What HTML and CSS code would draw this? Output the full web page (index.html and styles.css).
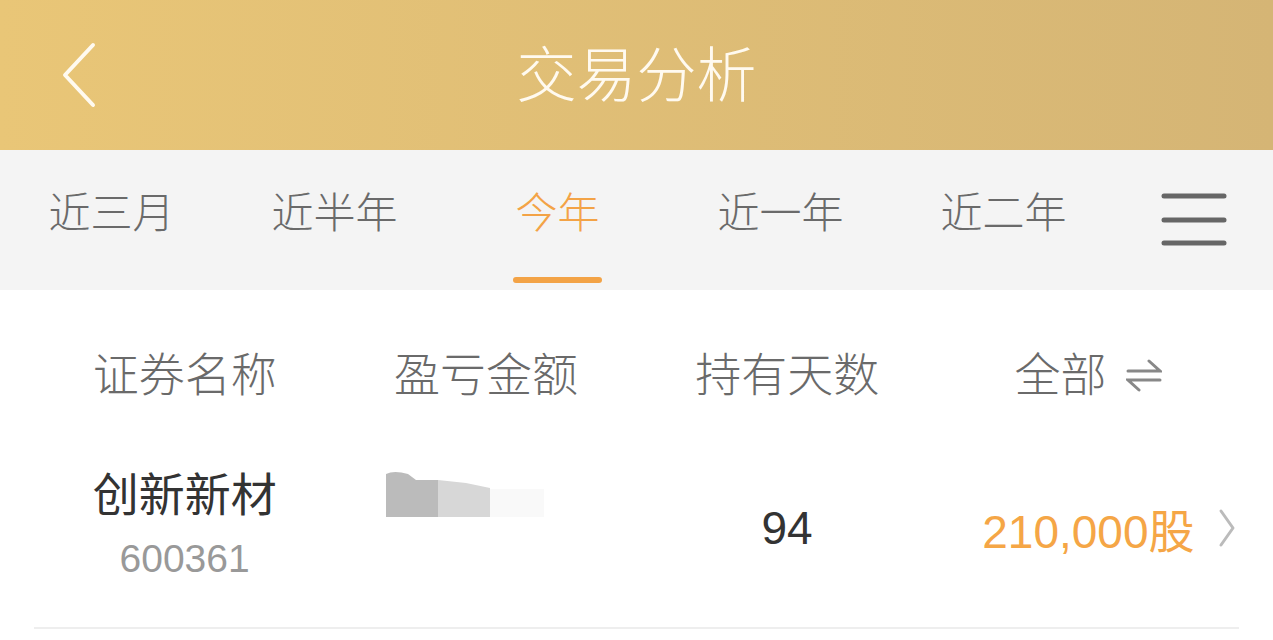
FILE: index.html
```html
<!DOCTYPE html>
<html lang="zh-CN">
<head>
    <meta charset="UTF-8">
    <meta name="viewport" content="width=device-width, initial-scale=1.0">
    <title>交易分析</title>
    <link rel="stylesheet" href="styles.css">
</head>
<body>
    <div class="header">
        <div class="back">
            <svg width="36" height="66" viewBox="0 0 36 66">
                <polyline points="31,3 3,33 31,63" fill="none" stroke="#fffaf0" stroke-width="4" stroke-linecap="round" stroke-linejoin="round"/>
            </svg>
        </div>
        <div class="title">交易分析</div>
        <div></div>
    </div>

    <div class="tabs">
        <div class="tab"><span>近三月</span></div>
        <div class="tab"><span>近半年</span></div>
        <div class="tab active"><span>今年</span><i class="bar"></i></div>
        <div class="tab"><span>近一年</span></div>
        <div class="tab"><span>近二年</span></div>
        <div class="menu">
            <svg width="66" height="54" viewBox="0 0 66 54">
                <g stroke="#666" stroke-width="5" stroke-linecap="round">
                    <line x1="3" y1="3" x2="63" y2="3"/>
                    <line x1="3" y1="27" x2="63" y2="27"/>
                    <line x1="3" y1="50" x2="63" y2="50"/>
                </g>
            </svg>
        </div>
    </div>

    <div class="list">
        <div class="list-head">
            <div class="cell">证券名称</div>
            <div class="cell">盈亏金额</div>
            <div class="cell">持有天数</div>
            <div class="cell">全部
                <svg class="swap" width="36" height="33" viewBox="0 0 36 33">
                    <g fill="none" stroke="#888" stroke-width="3" stroke-linecap="round">
                        <polyline points="23,2 34,12 2,12"/>
                        <polyline points="34,21 2,21 13,31"/>
                    </g>
                </svg>
            </div>
        </div>

        <div class="row">
            <div class="cell stock">
                <div class="name">创新新材</div>
                <div class="code">600361</div>
            </div>
            <div class="cell profit">
                <svg width="160" height="46" viewBox="0 0 160 46">
                    <path d="M0 3 Q8 -1 22 3 L30 9 L52 9 L52 46 L0 46 Z" fill="#bbbbbb"/>
                    <path d="M52 9 L80 12 L104 17 L104 46 L52 46 Z" fill="#d7d7d7"/>
                    <rect x="104" y="18" width="54" height="28" fill="#f9f9f9"/>
                </svg>
            </div>
            <div class="cell num">94</div>
            <div class="cell amount">
                <span class="shares">210,000股</span>
                <svg class="more" width="18" height="40" viewBox="0 0 18 40">
                    <polyline points="3,3 15,20 3,37" fill="none" stroke="#bbb" stroke-width="3" stroke-linecap="round" stroke-linejoin="round"/>
                </svg>
            </div>
        </div>
    </div>
</body>
</html>
```

FILE: styles.css
```css
body {
    margin: 0;
    font-family: "Liberation Sans", "Noto Sans CJK SC", sans-serif;
    font-weight: 300;
    background: #fff;
}

/* top bar */
.header {
    height: 150px;
    display: grid;
    grid-template-columns: 1fr auto 1fr;
    align-items: center;
    background: linear-gradient(to right, #e9c677, #d5b575);
}

.back {
    padding-left: 62px;
    display: flex;
    align-items: center;
}

.title {
    color: #fffaf0;
    font-size: 60px;
    line-height: 60px;
    margin-top: 4px;
}

/* period tabs */
.tabs {
    display: flex;
    height: 140px;
    background: #f4f4f4;
}

.tab {
    width: 223px;
    display: flex;
    flex-direction: column;
    align-items: center;
    padding-top: 43px;
    box-sizing: border-box;
    font-size: 42px;
    line-height: 42px;
    color: #6a6a6a;
}

.tab.active {
    color: #f3a346;
}

.tab .bar {
    width: 89px;
    height: 6px;
    margin-top: 42px;
    border-radius: 3px;
    background: #f3a346;
}

.menu {
    flex: 1;
    display: flex;
    align-items: center;
    justify-content: center;
}

/* list */
.list {
    padding: 0 34px;
}

.list-head, .row {
    display: grid;
    grid-template-columns: repeat(4, 1fr);
}

.list-head {
    height: 170px;
    align-items: center;
    font-size: 46px;
    line-height: 46px;
    color: #6a6a6a;
}

.cell {
    display: flex;
    justify-content: center;
    align-items: center;
}

.swap {
    margin-left: 20px;
}

.row {
    padding: 4px 0 35px;
    align-items: center;
    border-bottom: 2px solid #eeeeee;
}

.stock {
    flex-direction: column;
}

.name {
    font-size: 46px;
    line-height: 62px;
    font-weight: 400;
    color: #333;
}

.code {
    font-size: 39px;
    line-height: 66px;
    font-weight: 400;
    color: #999;
}

.profit {
    align-self: start;
    justify-content: flex-start;
    padding-left: 51px;
    margin-top: 7px;
}

.num {
    font-size: 46px;
    font-weight: 400;
    color: #333;
}

.amount {
    display: grid;
    grid-template-columns: 1fr auto 1fr;
}

.shares {
    grid-column: 2;
    font-size: 46px;
    font-weight: 400;
    color: #f5a646;
}

.more {
    grid-column: 3;
    justify-self: end;
    margin-right: 3px;
}
```
